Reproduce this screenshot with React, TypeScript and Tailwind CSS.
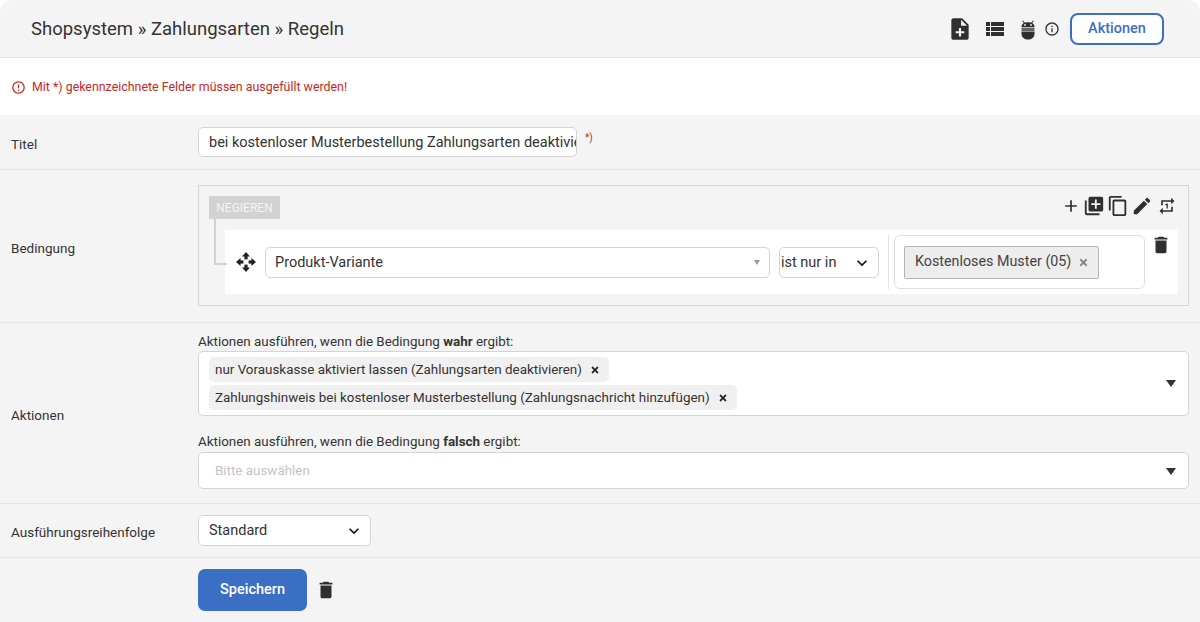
import React from 'react';
import {
    MdNoteAdd,
    MdViewList,
    MdInfoOutline,
    MdAdd,
    MdLibraryAdd,
    MdContentCopy,
    MdEdit,
    MdRepeatOne,
    MdDelete,
    MdErrorOutline,
    MdKeyboardArrowDown,
} from 'react-icons/md';
import { FaTimes } from 'react-icons/fa';

const BugIcon = () => (
    <svg width="16" height="20" viewBox="0 0 16 20" fill="#2f2f2f">
        <path d="M3 0.5 L5 3 L4.2 3.6 L2.2 1 Z M13 0.5 L11 3 L11.8 3.6 L13.8 1 Z" />
        <path d="M1.5 7 C1.5 3.5 4.5 2.2 8 2.2 C11.5 2.2 14.5 3.5 14.5 7 Z" />
        <rect x="1.5" y="7.6" width="13" height="3.4" fill="#666" />
        <path d="M1.5 11.6 H14.5 V14 C14.5 17.5 11.5 19.5 8 19.5 C4.5 19.5 1.5 17.5 1.5 14 Z" />
        <circle cx="5" cy="5" r="0.9" fill="#f4f4f4" />
        <circle cx="11" cy="5" r="0.9" fill="#f4f4f4" />
    </svg>
);

const MoveIcon = () => (
    <svg width="20" height="20" viewBox="0 0 20 20" fill="#222">
        <path d="M10 0 L14 4.6 H6 Z M10 20 L14 15.4 H6 Z M0 10 L4.6 6 V14 Z M20 10 L15.4 6 V14 Z" />
        <rect x="8.4" y="4" width="3.2" height="3.4" />
        <rect x="8.4" y="12.6" width="3.2" height="3.4" />
        <rect x="4" y="8.4" width="3.4" height="3.2" />
        <rect x="12.6" y="8.4" width="3.4" height="3.2" />
    </svg>
);

const Row: React.FC<{ label: string; className: string; children: React.ReactNode }> = ({ label, className, children }) => (
    <div className={`flex items-center border-b border-[#e6e6e6] pl-[11px] pr-[11px] ${className}`}>
        <div className="w-[187px] shrink-0 pt-[4px] text-[13.5px] text-[#333]">{label}</div>
        <div className="min-w-0 flex-1">{children}</div>
    </div>
);

const Tag: React.FC<{ text: string }> = ({ text }) => (
    <div className="flex h-[25px] w-fit items-center rounded-[5px] bg-[#f0f0f0] pl-[6px] pr-[9px] pt-[1px] text-[13.4px] text-[#333]">
        {text}
        <FaTimes className="ml-[8px] text-[10px] text-[#222]" />
    </div>
);

const Caret = () => <div className="h-0 w-0 border-x-[5px] border-t-[7px] border-x-transparent border-t-[#333]" />;

export default function App() {
    return (
        <div className="h-[622px] w-[1200px] overflow-hidden bg-white font-['Roboto',sans-serif]">
            {/* page head */}
            <div className="flex h-[58px] items-center justify-between rounded-t-[12px] border-b border-[#e2e2e2] bg-[#f4f4f4] pl-[31px] pr-[36px]">
                <div className="pt-[2px] text-[18.5px] text-[#333]">Shopsystem » Zahlungsarten » Regeln</div>
                <div className="flex items-center">
                    <MdNoteAdd className="text-[26px] text-[#2f2f2f]" />
                    <MdViewList className="ml-[10px] text-[24px] text-[#2f2f2f]" />
                    <div className="ml-[13px] mt-[2px]"><BugIcon /></div>
                    <MdInfoOutline className="ml-[8px] text-[16px] text-[#333]" />
                    <button className="ml-[10px] h-[32px] w-[94px] rounded-[8px] border-2 border-[#3b6fc4] bg-white text-[14.5px] font-medium text-[#3b6fc4]">
                        Aktionen
                    </button>
                </div>
            </div>

            {/* hint */}
            <div className="flex h-[57px] items-center pl-[11px] pt-[1px] text-[12.4px] text-[#c8281e]">
                <MdErrorOutline className="mr-[6px] text-[15px]" />
                Mit *) gekennzeichnete Felder müssen ausgefüllt werden!
            </div>

            <div className="bg-[#f4f4f4]">
                <Row label="Titel" className="h-[55px]">
                    <div className="flex items-start">
                        <div className="flex h-[30px] w-[379px] items-center overflow-hidden whitespace-nowrap rounded-[5px] border border-[#d4d4d4] bg-white pl-[10px] pt-[1px] text-[14.5px] text-[#333]">
                            bei kostenloser Musterbestellung Zahlungsarten deaktivieren
                        </div>
                        <span className="ml-[8px] mt-[3px] text-[10px] text-[#c8281e]">*)</span>
                    </div>
                </Row>

                <Row label="Bedingung" className="h-[153px]">
                    <div className="relative mb-[1px] h-[121px] border-[1.5px] border-[#d6d6d6] px-[10px] pt-[10px]">
                        <div className="flex h-[23px] w-[71px] items-center justify-center bg-[#d2d2d2] text-[12px] text-[#f4f4f4]">
                            NEGIEREN
                        </div>
                        <div className="absolute right-[11px] top-[9px] flex items-center gap-[2px] text-[#2f2f2f]">
                            <MdAdd className="text-[20px]" />
                            <MdLibraryAdd className="text-[22px]" />
                            <MdContentCopy className="text-[22px]" />
                            <MdEdit className="text-[22px]" />
                            <MdRepeatOne className="ml-[2px] text-[20px]" />
                        </div>
                        {/* connector from the badge to the rule */}
                        <div className="absolute left-[15px] top-[32px] h-[47px] w-[13px] border-b-2 border-l-2 border-[#d2d2d2]" />
                        <div className="ml-[16px] mt-[11px] flex h-[64px] items-center bg-white pl-[11px]">
                            <MoveIcon />
                            <div className="ml-[9px] flex h-[31px] w-[505px] items-center justify-between rounded-[5px] border border-[#d4d4d4] pl-[9px] pr-[9px] pt-[1px] text-[14.5px] text-[#333]">
                                Produkt-Variante
                                <div className="h-0 w-0 border-x-[3.5px] border-t-[5px] border-x-transparent border-t-[#999]" />
                            </div>
                            <div className="ml-[9px] flex h-[31px] w-[100px] items-center justify-between rounded-[5px] border border-[#d4d4d4] pl-[1px] pr-[6px] pt-[1px] text-[14.5px] text-[#333]">
                                ist nur in
                                <MdKeyboardArrowDown className="text-[20px] text-[#111]" />
                            </div>
                            <div className="ml-[9px] h-[54px] w-px bg-[#e4e4e4]" />
                            <div className="ml-[5px] flex h-[54px] w-[251px] items-center rounded-[6px] border border-[#dedede] pl-[9px]">
                                <div className="flex h-[33px] items-center rounded-[2px] border border-[#b5b5b5] bg-[#ededed] pl-[10px] pr-[9px] text-[14.3px] text-[#444]">
                                    Kostenloses Muster (05)
                                    <FaTimes className="ml-[7px] text-[11px] text-[#888]" />
                                </div>
                            </div>
                            <MdDelete className="mb-[34px] ml-[5px] text-[22px] text-[#2f2f2f]" />
                        </div>
                    </div>
                </Row>

                <Row label="Aktionen" className="h-[181px]">
                    <div className="mb-[6px] text-[13.4px] text-[#333]">
                        <div className="h-[20px] pt-[1px] leading-[20px]">
                            Aktionen ausführen, wenn die Bedingung <b>wahr</b> ergibt:
                        </div>
                        <div className="flex h-[65px] items-center justify-between rounded-[5px] border border-[#d4d4d4] bg-white pl-[10px] pr-[12px]">
                            <div className="flex flex-col gap-[3px]">
                                <Tag text="nur Vorauskasse aktiviert lassen (Zahlungsarten deaktivieren)" />
                                <Tag text="Zahlungshinweis bei kostenloser Musterbestellung (Zahlungsnachricht hinzufügen)" />
                            </div>
                            <Caret />
                        </div>
                        <div className="mb-[1px] mt-[15px] h-[20px] pt-[1px] leading-[20px]">
                            Aktionen ausführen, wenn die Bedingung <b>falsch</b> ergibt:
                        </div>
                        <div className="flex h-[37px] items-center justify-between rounded-[5px] border border-[#d4d4d4] bg-white pl-[16px] pr-[12px] pt-[1px] text-[#c4c4c4]">
                            Bitte auswählen
                            <Caret />
                        </div>
                    </div>
                </Row>

                <Row label="Ausführungsreihenfolge" className="h-[54px]">
                    <div className="flex h-[31px] w-[173px] items-center justify-between rounded-[5px] border border-[#d4d4d4] bg-white pl-[10px] pr-[6px] text-[14.5px] text-[#333]">
                        Standard
                        <MdKeyboardArrowDown className="text-[20px] text-[#111]" />
                    </div>
                </Row>

                <div className="flex h-[64px] items-center pl-[198px] pb-[1px]">
                    <button className="h-[42px] w-[109px] rounded-[7px] bg-[#3b6fc4] text-[14.5px] font-medium text-white">
                        Speichern
                    </button>
                    <MdDelete className="ml-[8px] text-[22px] text-[#2f2f2f]" />
                </div>
            </div>
        </div>
    );
}
